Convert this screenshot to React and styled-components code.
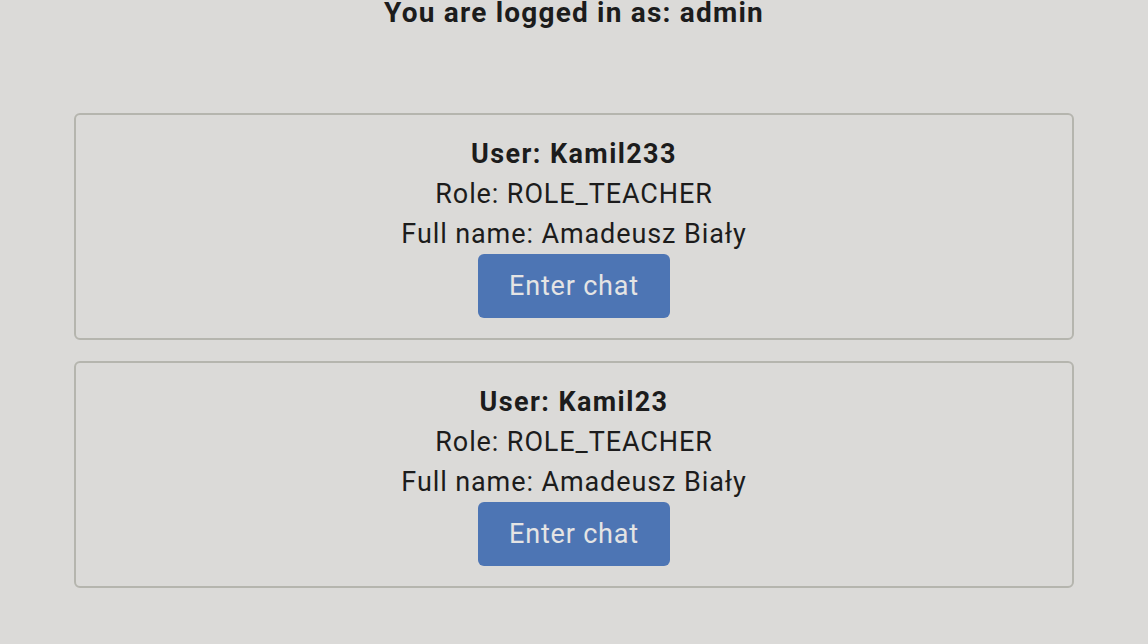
import styled, { createGlobalStyle } from "styled-components"

const GlobalStyle = createGlobalStyle`
  html, body {
    margin: 0;
    background: #dbdad8;
  }
  body {
    font-family: Roboto, "Liberation Sans", sans-serif;
    color: #1c1c1c;
  }
`

const Page = styled.div`
  min-height: 644px;
  background: #dbdad8;
`

const Header = styled.h2`
  margin: 0;
  font-size: 28px;
  line-height: 26px;
  font-weight: 700;
  letter-spacing: 1.2px;
  text-align: center;
`

const UserList = styled.div`
  max-width: 1000px;
  margin: 87px auto 0;
  display: flex;
  flex-direction: column;
  gap: 21px;
`

const UserCard = styled.div`
  border: 2px solid #b5b5ae;
  border-radius: 6px;
  padding: 19px 20px 20px;
  display: flex;
  flex-direction: column;
  align-items: center;
  font-size: 27px;
  line-height: 40px;
  letter-spacing: 0.9px;
`

const UserName = styled.div`
  font-weight: 700;
  letter-spacing: 1.4px;
`

const Info = styled.div``

const ChatButton = styled.button`
  width: 192px;
  height: 64px;
  border: none;
  border-radius: 6px;
  background: #4d75b4;
  color: #e4e4e4;
  font-family: inherit;
  font-size: 27px;
  letter-spacing: 0.8px;
  cursor: pointer;
`

const users = [
  { login: "Kamil233", role: "ROLE_TEACHER", fullName: "Amadeusz Biały" },
  { login: "Kamil23", role: "ROLE_TEACHER", fullName: "Amadeusz Biały" },
]

const App = () => {
  return (
    <Page>
      <GlobalStyle />
      <Header>You are logged in as: admin</Header>
      <UserList>
        {users.map((u) => (
          <UserCard key={u.login}>
            <UserName>User: {u.login}</UserName>
            <Info>Role: {u.role}</Info>
            <Info>Full name: {u.fullName}</Info>
            <ChatButton>Enter chat</ChatButton>
          </UserCard>
        ))}
      </UserList>
    </Page>
  )
}

export default App
